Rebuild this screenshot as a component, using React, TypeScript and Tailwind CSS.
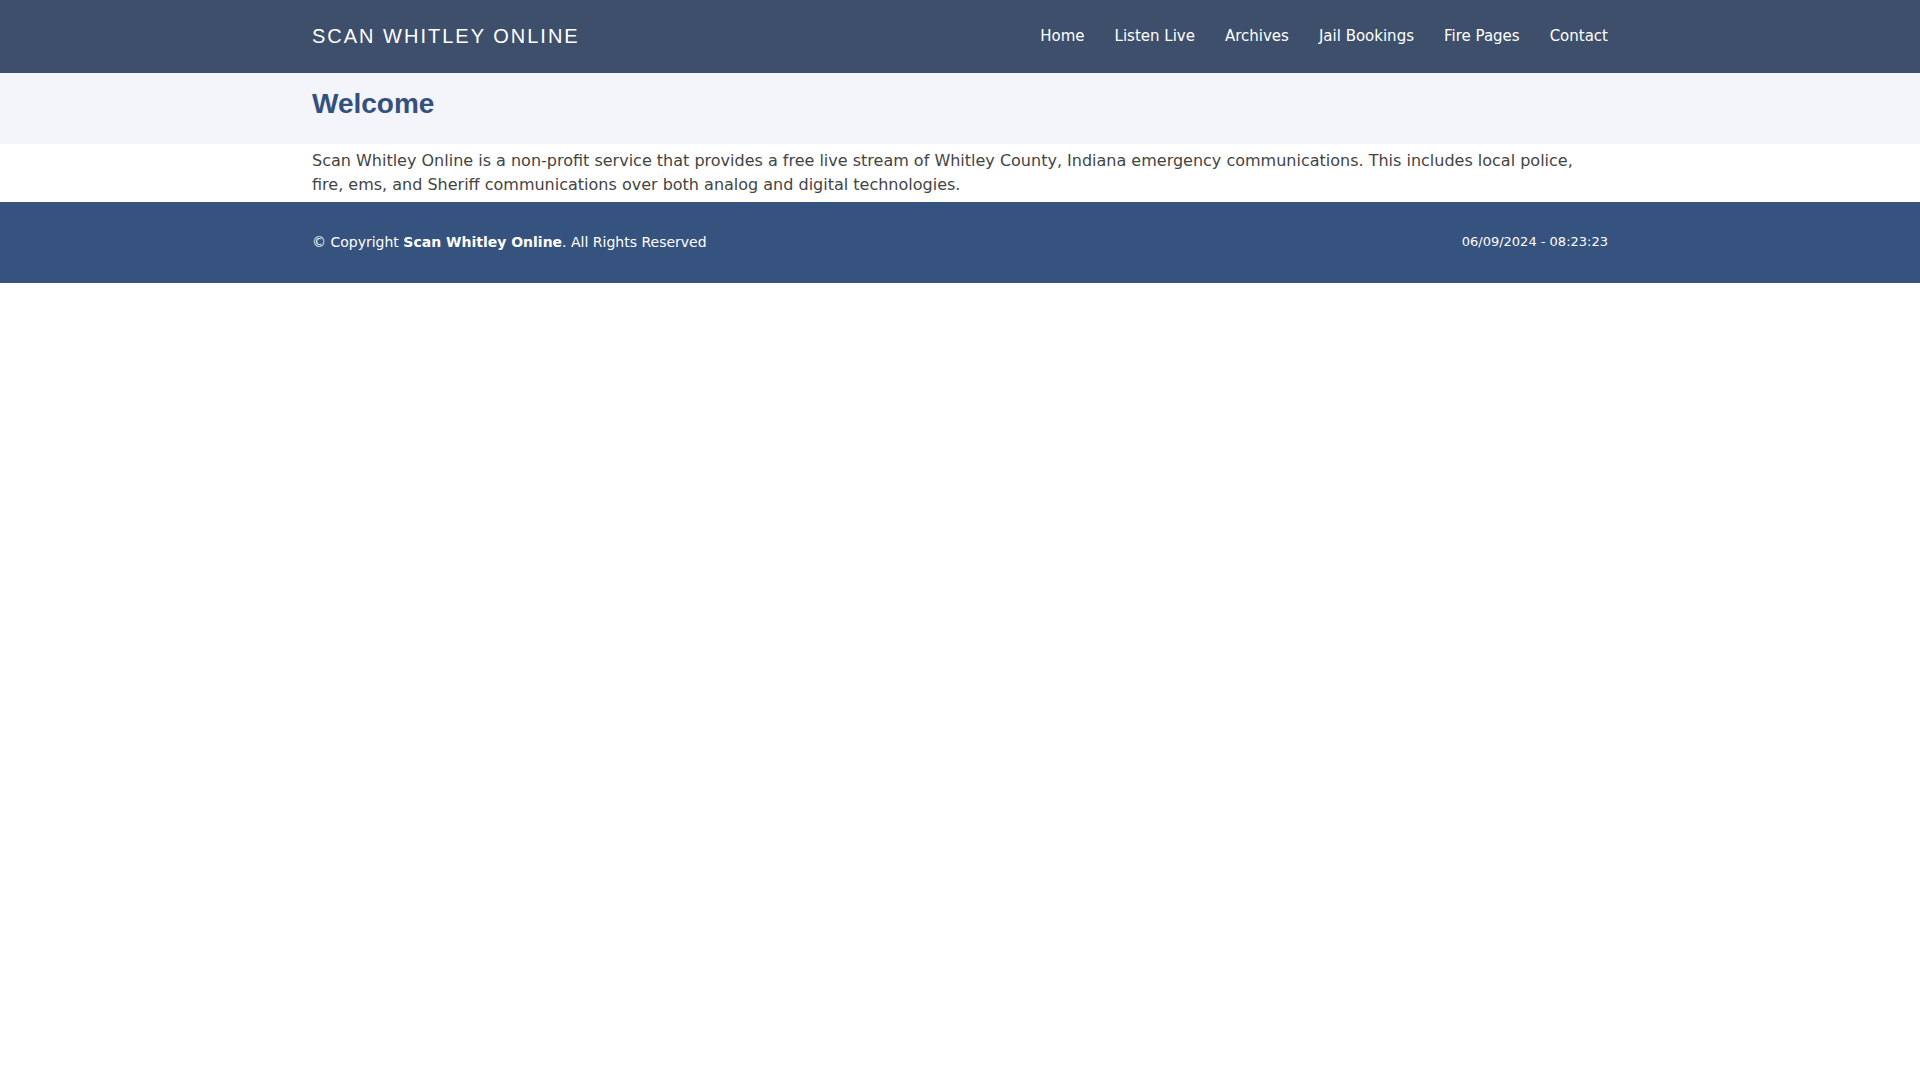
import React from "react";

const links = ["Home", "Listen Live", "Archives", "Jail Bookings", "Fire Pages", "Contact"];

export default function App() {
  return (
    <div className="w-full bg-white">
      <header className="bg-[#3e4f6c] h-[73px]">
        <div className="mx-auto w-[1296px] h-full flex items-center justify-between">
          <a className="text-white text-[20px] tracking-[2px] font-['Liberation_Sans',Arial,sans-serif] uppercase mb-[2px]">
            Scan Whitley Online
          </a>
          <nav className="flex items-center gap-[30px] font-['DejaVu_Sans',sans-serif] text-[15px] text-white">
            {links.map((l) => (
              <a key={l} className="text-white">
                {l}
              </a>
            ))}
          </nav>
        </div>
      </header>
      <section className="bg-[#f3f5fa] h-[71px]">
        <div className="mx-auto w-[1296px] pt-[17px]">
          <h1 className="text-[28px] font-bold text-[#34507c] font-['Liberation_Sans',Arial,sans-serif] leading-[28px]">
            Welcome
          </h1>
        </div>
      </section>
      <main className="mx-auto w-[1296px] pt-[5px] pb-[5px]">
        <p className="font-['DejaVu_Sans',sans-serif] text-[16px] leading-[24px] text-[#444444]">
          Scan Whitley Online is a non-profit service that provides a free live stream of Whitley County, Indiana emergency communications. This includes local police, fire, ems, and Sheriff communications over both analog and digital technologies.
        </p>
      </main>
      <footer className="bg-[#36527e] h-[81px]">
        <div className="mx-auto w-[1296px] h-full flex items-center justify-between font-['DejaVu_Sans',sans-serif] text-white">
          <div className="text-[14px]">
            © Copyright <strong className="font-bold">Scan Whitley Online</strong>. All Rights Reserved
          </div>
          <div className="text-[13px] mb-[2px]">06/09/2024 - 08:23:23</div>
        </div>
      </footer>
    </div>
  );
}
